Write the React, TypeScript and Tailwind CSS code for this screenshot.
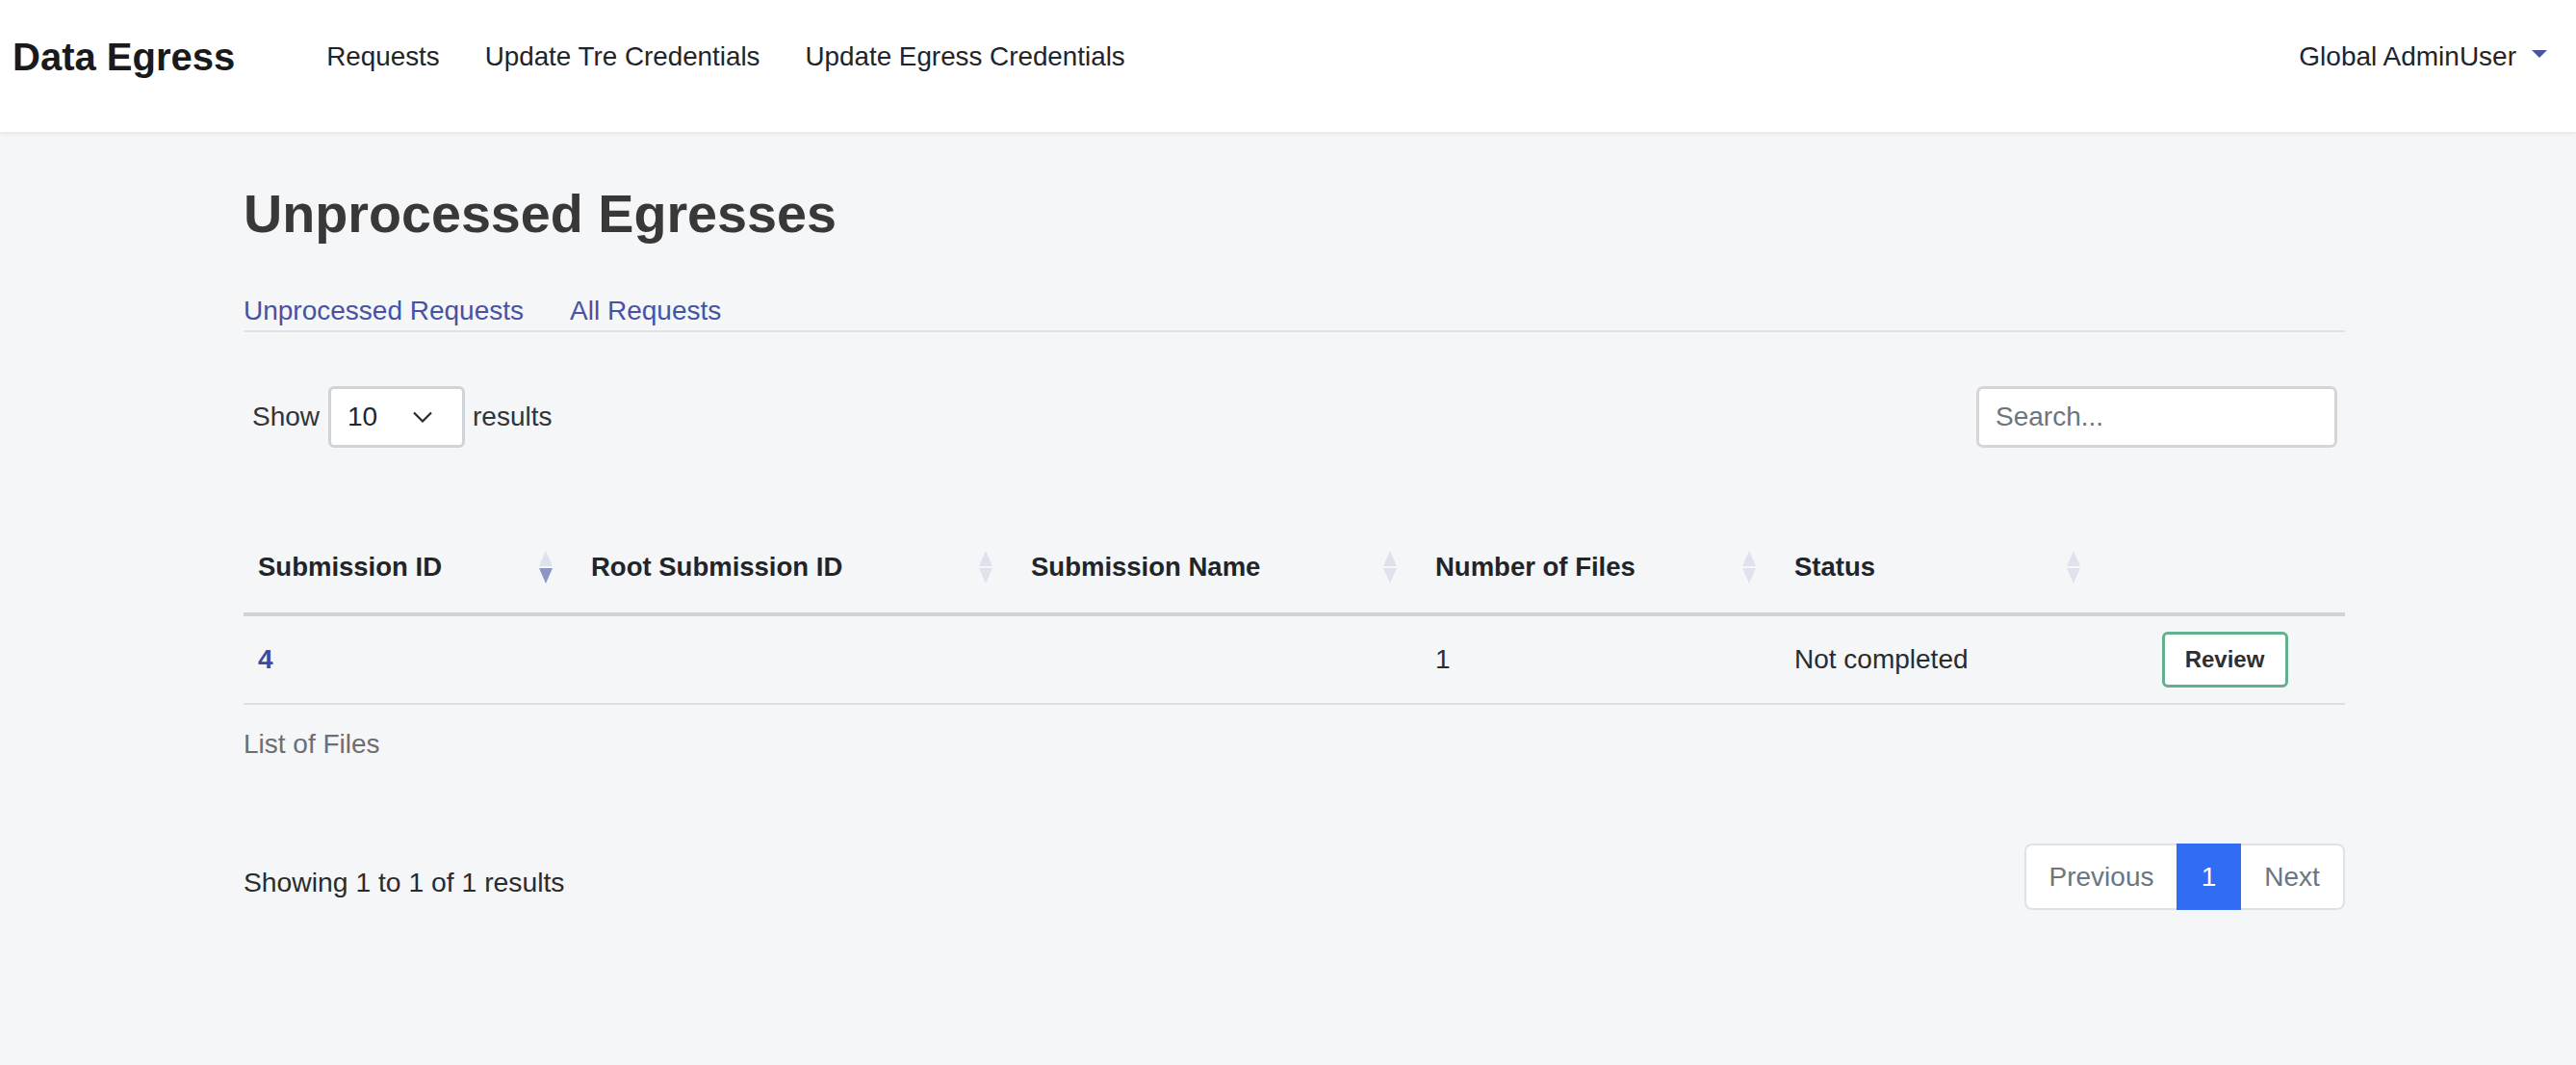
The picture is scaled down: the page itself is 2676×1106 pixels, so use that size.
import React from "react";

const font = { fontFamily: '"Liberation Sans", Arial, Helvetica, sans-serif' };

function SortIcon({ active }: { active?: boolean }) {
  return (
    <svg width="16" height="34" viewBox="0 0 16 34" className="shrink-0">
      <polygon points="8,0 15,16 1,16" fill="#dfe1ec" />
      <polygon points="1,18 15,18 8,34" fill={active ? "#8c97c8" : "#dfe1ec"} />
    </svg>
  );
}

function Th({ label, active, last }: { label?: string; active?: boolean; last?: boolean }) {
  return (
    <div className="flex items-center justify-between pl-[15px] pr-[24px] py-[27px]">
      <span className="text-[27.5px] leading-[41px] font-bold text-[#212529]">{label}</span>
      {!last && <SortIcon active={active} />}
    </div>
  );
}

export default function App() {
  return (
    <div className="min-h-screen bg-[#f5f6f8]" style={font}>
      <nav className="h-[137px] bg-white shadow-[0_2px_4px_rgba(0,0,0,0.07)] flex items-center pb-[19px] pl-[13px] pr-[30px]">
        <div className="text-[40px] font-bold text-[#1a1a1a] leading-none">Data Egress</div>
        <div className="flex items-center gap-[47px] ml-[95px] text-[27.8px] text-[#212529]">
          <span>Requests</span>
          <span>Update Tre Credentials</span>
          <span>Update Egress Credentials</span>
        </div>
        <div className="ml-auto flex items-center text-[28px] text-[#212529]">
          <span>Global AdminUser</span>
          <span className="ml-[16px] mb-[6px] w-0 h-0 border-t-[8px] border-t-[#4a55a2] border-x-[8px] border-x-transparent" />
        </div>
      </nav>

      <main className="ml-[253px] w-[2183px]">
        <h1 className="mt-[52px] text-[55.7px] leading-[66px] font-bold text-[#383838]">Unprocessed Egresses</h1>

        <div className="mt-[47px] flex gap-[48px] border-b-2 border-[#dfe2e8] text-[28px] leading-[41px] text-[#4653a3]">
          <span>Unprocessed Requests</span>
          <span>All Requests</span>
        </div>

        <div className="mt-[56px] flex items-center justify-between">
          <div className="flex items-center ml-[9px] text-[28px] text-[#333]">
            <span>Show</span>
            <div className="ml-[9px] mr-[8px] w-[142px] h-[64px] bg-white border-[3px] border-[#d0d3d7] rounded-[6px] flex items-center pl-[17px] pr-[30px] justify-between">
              <span className="text-[#212529]">10</span>
              <svg width="22" height="12" viewBox="0 0 22 12">
                <polyline points="2,1.5 11,10.5 20,1.5" fill="none" stroke="#2a2a2a" strokeWidth="2.2" />
              </svg>
            </div>
            <span>results</span>
          </div>
          <div className="mr-[8px] w-[375px] h-[64px] bg-white border-[3px] border-[#d3d5d8] rounded-[7px] flex items-center pl-[17px] text-[28px] text-[#6c757d]">
            Search...
          </div>
        </div>

        <div className="mt-[76px]">
          <div className="grid grid-cols-[346px_457px_420px_373px_337px_250px] border-b-4 border-[#d1d3d6]">
            <Th label="Submission ID" active />
            <Th label="Root Submission ID" />
            <Th label="Submission Name" />
            <Th label="Number of Files" />
            <Th label="Status" />
            <Th last />
          </div>
          <div className="grid grid-cols-[346px_457px_420px_373px_337px_250px] h-[92px] items-center border-b-2 border-[#dcdee2] text-[28px] text-[#2b2b2b]">
            <div className="pl-[15px] font-bold text-[#3f4ba0]">4</div>
            <div />
            <div />
            <div className="pl-[15px]">1</div>
            <div className="pl-[15px]">Not completed</div>
            <div className="flex justify-center">
              <div className="w-[131px] h-[58px] bg-white border-[3px] border-[#62b08d] rounded-[6px] flex items-center justify-center text-[24px] font-bold text-[#2f2f2f]">
                Review
              </div>
            </div>
          </div>
          <div className="mt-[20px] text-[28px] leading-[41px] text-[#6b6f73]">List of Files</div>
        </div>

        <div className="mt-[83px] flex items-start justify-between">
          <div className="mt-[20px] text-[28.3px] leading-[41px] text-[#2b2b2b]">Showing 1 to 1 of 1 results</div>
          <div className="flex h-[69px] text-[28px]">
            <div className="w-[158px] bg-white border-2 border-r-0 border-[#dee2e6] rounded-l-[8px] flex items-center justify-center text-[#6c757d]">Previous</div>
            <div className="w-[67px] bg-[#316cf4] flex items-center justify-center text-white">1</div>
            <div className="w-[108px] bg-white border-2 border-l-0 border-[#dee2e6] rounded-r-[8px] flex items-center justify-center text-[#6c757d]">Next</div>
          </div>
        </div>
      </main>
    </div>
  );
}
